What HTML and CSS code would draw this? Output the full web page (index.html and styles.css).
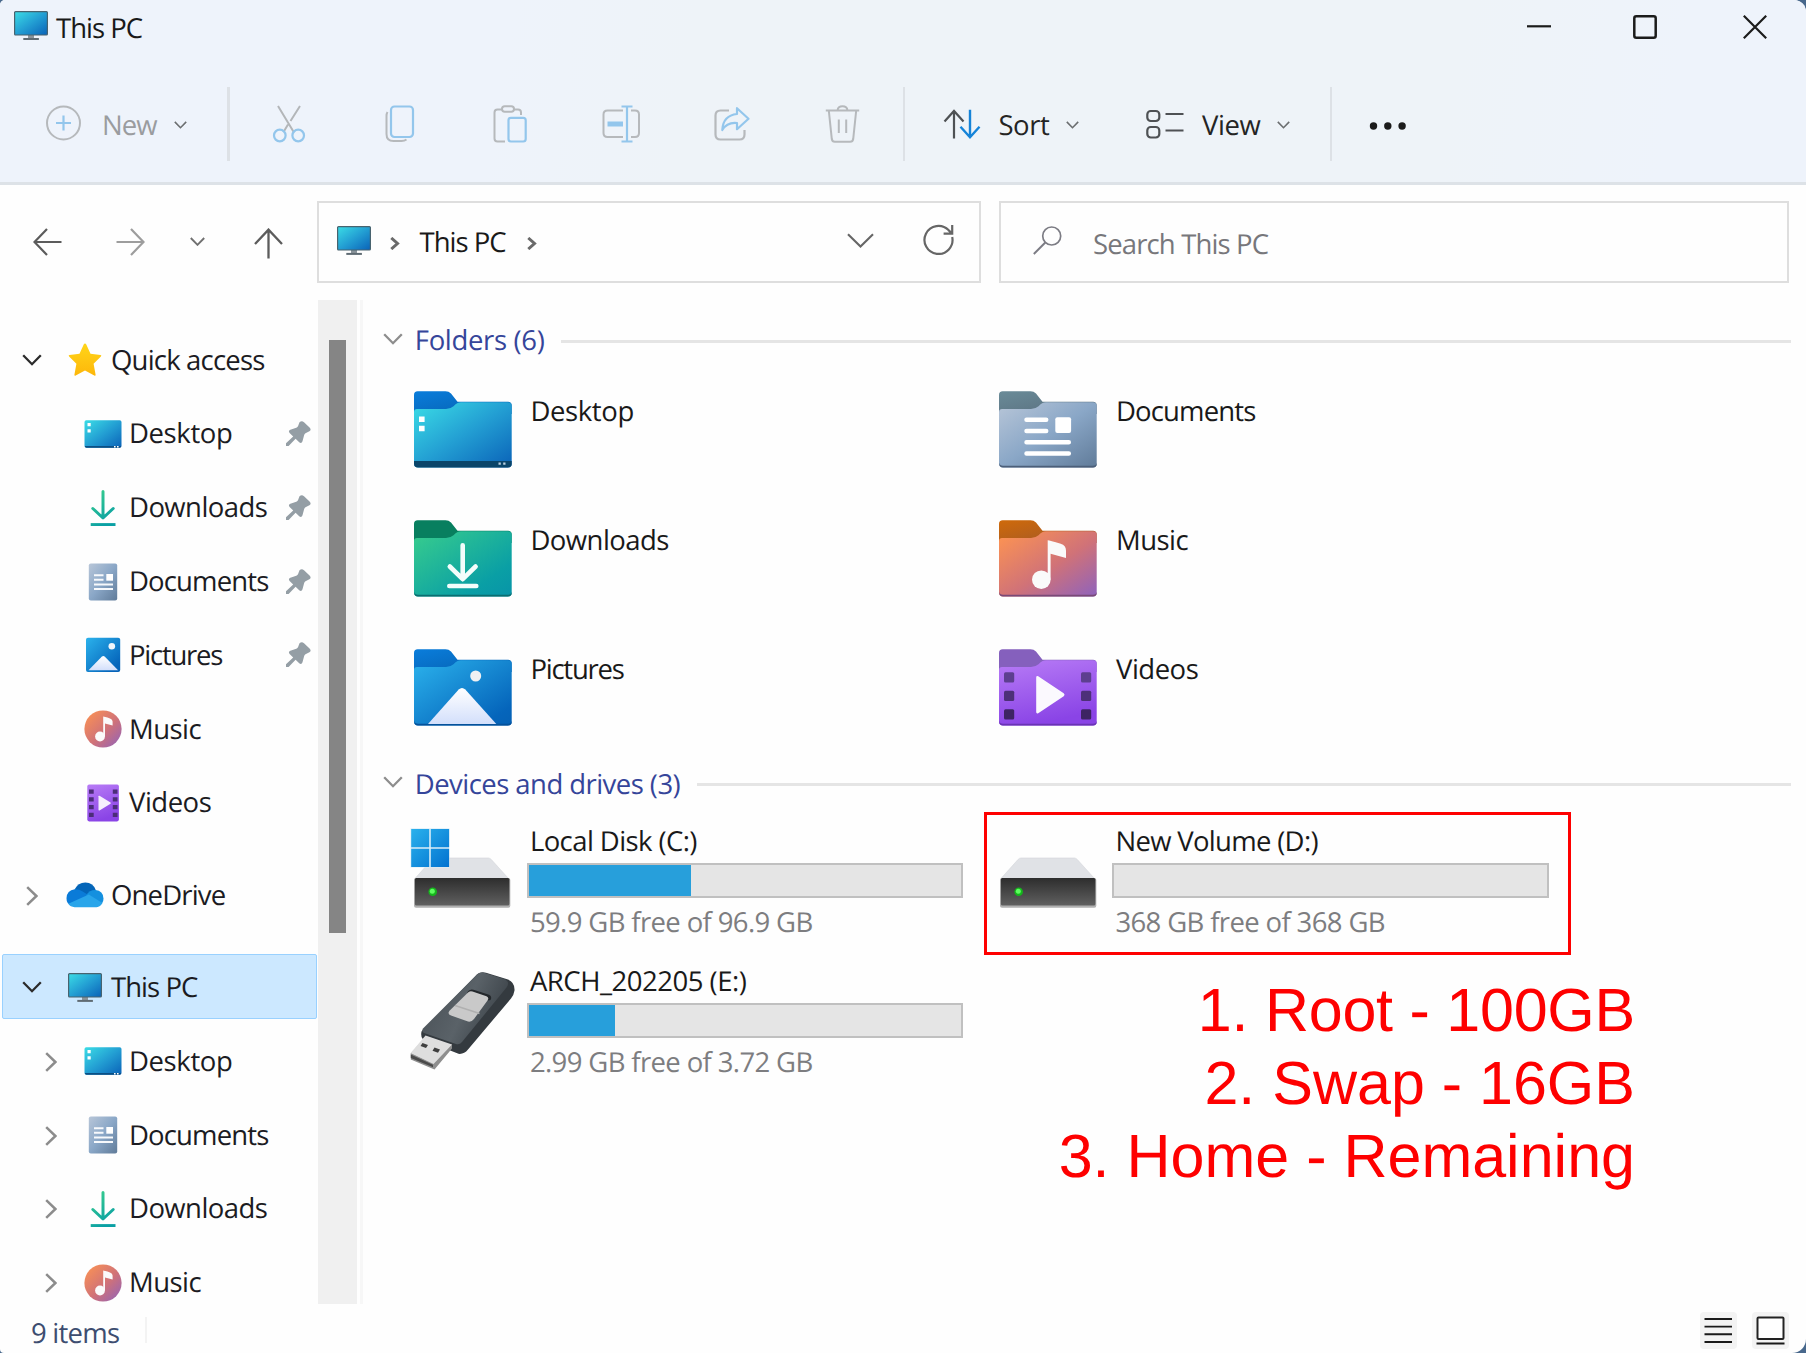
FILE: index.html
```
<!DOCTYPE html>
<html lang="en">
<head>
<meta charset="utf-8">
<title>This PC</title>
<link rel="stylesheet" href="styles.css">
</head>
<body>
<svg class="defs" aria-hidden="true">
  <defs>
    <linearGradient id="gScreen" x1="0" y1="0" x2="1" y2="1"><stop offset="0" stop-color="#3bdde6"/><stop offset=".5" stop-color="#239fd3"/><stop offset="1" stop-color="#0a62b8"/></linearGradient>
    <linearGradient id="gGreen" x1="0" y1="0" x2="1" y2="1"><stop offset="0" stop-color="#38cd8d"/><stop offset=".75" stop-color="#0a9fa5"/><stop offset="1" stop-color="#0894a8"/></linearGradient>
    <linearGradient id="gArrow" gradientUnits="userSpaceOnUse" x1="8" y1="4" x2="26" y2="32"><stop offset="0" stop-color="#38cd8d"/><stop offset="1" stop-color="#0aa0a4"/></linearGradient>
    <linearGradient id="gBlue" x1="0" y1="0" x2="1" y2="1"><stop offset="0" stop-color="#2bb2ec"/><stop offset=".85" stop-color="#0565bb"/><stop offset="1" stop-color="#0561b5"/></linearGradient>
    <linearGradient id="gGrey" x1="0" y1="0" x2="1" y2="1"><stop offset="0" stop-color="#b8c6d8"/><stop offset=".5" stop-color="#8aa7c7"/><stop offset="1" stop-color="#607b99"/></linearGradient>
    <linearGradient id="gMusic" x1="0" y1="0" x2="1" y2="1"><stop offset="0" stop-color="#ff9550"/><stop offset=".55" stop-color="#d07278"/><stop offset="1" stop-color="#8e62bd"/></linearGradient>
    <linearGradient id="gVideo" x1="0" y1="0" x2=".3" y2="1"><stop offset="0" stop-color="#b87cf6"/><stop offset="1" stop-color="#8a44e6"/></linearGradient>
    <linearGradient id="gTabBlue" x1="0" y1="0" x2="1" y2="1"><stop offset="0" stop-color="#0a7ddb"/><stop offset="1" stop-color="#055fae"/></linearGradient>
    <linearGradient id="gTabGrey" x1="0" y1="0" x2="1" y2="1"><stop offset="0" stop-color="#6a8b98"/><stop offset="1" stop-color="#576b7b"/></linearGradient>
    <linearGradient id="gTabMusic" x1="0" y1="0" x2="1" y2="1"><stop offset="0" stop-color="#cf6a0a"/><stop offset="1" stop-color="#9c562c"/></linearGradient>
    <linearGradient id="gHill" x1="0" y1="0" x2="0" y2="1"><stop offset="0" stop-color="#ffffff"/><stop offset="1" stop-color="#d3dffb"/></linearGradient>
    <linearGradient id="gStar" x1="0" y1="0" x2="0" y2="1"><stop offset="0" stop-color="#ffd519"/><stop offset="1" stop-color="#fdb70a"/></linearGradient>
    <linearGradient id="gDrive" x1="0" y1="0" x2="0" y2="1"><stop offset="0" stop-color="#2d2d2d"/><stop offset="1" stop-color="#606060"/></linearGradient>
    <linearGradient id="gLogo" x1="0" y1="0" x2="1" y2="1"><stop offset="0" stop-color="#2ab1ec"/><stop offset="1" stop-color="#0272d0"/></linearGradient>
    <linearGradient id="gStick" x1="0" y1="0" x2="1" y2=".4"><stop offset="0" stop-color="#474e54"/><stop offset=".6" stop-color="#5a6268"/><stop offset="1" stop-color="#3d444a"/></linearGradient>
    <linearGradient id="gPlug" x1="0" y1="0" x2="1" y2="1"><stop offset="0" stop-color="#ececec"/><stop offset="1" stop-color="#a2a2a2"/></linearGradient>

    <symbol id="pc" viewBox="0 0 34 29"><path fill="#8a949b" d="M14 24h6v3.5h-6z"/><path fill="#5f6b73" d="M9.3 26.9h15.6v2H9.3z"/><rect x=".6" y=".6" width="32.8" height="23.4" rx="1" fill="url(#gScreen)" stroke="#48636f" stroke-width="1.2"/></symbol>
    <symbol id="v" viewBox="0 0 20 12"><path d="M1.2 1.2 10 10.2l8.8-9" fill="none" stroke="currentColor" stroke-width="2.3"/></symbol>
    <symbol id="vs" viewBox="0 0 13 8"><path d="M.8.9 6.500 6.700l5.700-5.800" fill="none" stroke="currentColor" stroke-width="1.6"/></symbol>
    <symbol id="r" viewBox="0 0 12 20"><path d="M1.200 1.200 10.400 10l-9.200 8.800" fill="none" stroke="currentColor" stroke-width="2.5"/></symbol>
    <symbol id="rs" viewBox="0 0 10 13"><path d="M1.300 1 7.500 6.500l-6.200 5.500" fill="none" stroke="currentColor" stroke-width="3"/></symbol>

    <symbol id="s-desktop" viewBox="0 0 38 28"><rect x=".5" y=".2" width="37" height="27.600" rx="1.800" fill="url(#gScreen)"/><path fill="#0b4f84" d="M.8 26h36.400q-.3 1.800-1.800 1.800H2.500Q1 27.800.8 26z"/><path fill="#fff" d="M3.500 3h3.200v3.200H3.500zM3.500 9.200h3.200v3.200H3.500zM30 26h1.600v1.600H30zM33 26h1.600v1.600H33z"/></symbol>
    <symbol id="s-downloads" viewBox="0 0 38 38"><path fill="none" stroke="url(#gArrow)" stroke-width="3" stroke-linecap="round" stroke-linejoin="round" d="M19 2.500V28.500M8.800 19.500 19 29l10.200-9.500"/><path fill="url(#gArrow)" d="M6.700 34.100h24.800v2.900H6.700z"/></symbol>
    <symbol id="s-documents" viewBox="0 0 38 38"><rect x="4.800" y=".5" width="28.400" height="37" rx="2" fill="url(#gGrey)"/><path stroke="#f7f9fc" stroke-width="1.900" d="M10 12.300h9.500M10 16.800h9.500M10 21.500h19M10 26h19"/><path fill="#fff" d="M22.300 11h6.700v6.700h-6.700z"/></symbol>
    <symbol id="s-pictures" viewBox="0 0 38 38"><rect x="2" y="1.800" width="34.200" height="34.200" rx="2" fill="url(#gBlue)"/><circle cx="27.800" cy="10.300" r="3.300" fill="#eef5fb"/><path fill="url(#gHill)" d="m4.500 34.200 13.200-13.400q1.600-1.400 3.200 0l13.200 13.400z"/></symbol>
    <symbol id="s-music" viewBox="0 0 38 38"><circle cx="19" cy="19" r="18.600" fill="url(#gMusic)"/><circle cx="16" cy="26.500" r="4.900" fill="#fbfafa"/><path fill="#fbfafa" d="M19.200 6.500q1 0 6.800 1.900 2.600.8 2.600 3v4l-7.600-1.900v13h-1.800z"/></symbol>
    <symbol id="s-videos" viewBox="0 0 38 38"><rect x="3.300" y=".6" width="31.600" height="36.800" rx="1.800" fill="url(#gVideo)"/><path fill="#4b2d78" d="M5 5.500h4.700v4.200H5zM5 13.300h4.700v4.200H5zM5 21h4.700v4.200H5zM5 28.800h4.700V33H5zM28.800 5.500h4.700v4.200h-4.700zM28.800 13.300h4.700v4.200h-4.700zM28.800 21h4.700v4.200h-4.700zM28.800 28.800h4.700V33h-4.700z"/><path fill="#f5effd" d="M14.500 12.300q0-1 1-.5l11 6.700q.8.600 0 1.200l-11 6.700q-1 .4-1-.6z"/></symbol>
    <symbol id="s-star" viewBox="0 0 34 34"><path fill="url(#gStar)" d="M17 .6q.8 0 1.300 1l4.200 9.200 10 1.200q1.500.4.400 1.600l-7.300 7.100 2 11q.1 1.500-1.300.9L17 27.600l-9.300 5q-1.400.6-1.300-.9l2-11L1.100 13.600Q0 12.400 1.500 12l10-1.200 4.200-9.200q.5-1 1.300-1z"/></symbol>
    <symbol id="s-cloud" viewBox="0 0 38 26"><path fill="#0465b8" d="M8.500 7.500Q12 .7 19.300.6q8 .3 10.700 7.800L22 16z"/><path fill="#0a7bd8" d="M6 24Q.3 22 .5 16.200.8 8.200 8.700 7.200q4.300-.2 8 2.300l7 4.600z"/><path fill="#1490df" d="M20 13.500q3.500-5.500 9.500-5.400 7.600.9 8 8.300.1 3-1.700 5.500z"/><path fill="#29a5ea" d="M2.300 21.800 22.800 12.500 36.400 21q-2 3.900-5.800 4.200H8.500q-4-.2-6.200-3.400z"/></symbol>
    <symbol id="pin" viewBox="0 0 25 26"><path fill="#949ea5" d="M13.500 1.200Q15.800-.6 18 1.200l5.800 5.500q1.800 2-.4 3.600L19.500 12.200q-1 .6-1.400 2l-1.600 6q-1 2.800-3.300 1L9.600 17.800 2.600 24.900H0v-2.600l7.200-6.800-3.600-3.600q-1.700-2.200.7-3.200l6-2q1.300-.5 1.800-1.600z"/></symbol>

    <symbol id="tab" viewBox="0 0 98 77"><path d="M0 23V4Q0 .3 3.700.3H31.500q3.300 0 5.500 2.200l6.500 8.200H94q3.700 0 3.700 3.500V23z"/></symbol>
    <symbol id="front" viewBox="0 0 98 77"><path d="M0 21q0-3 3-3H32q4.500 0 7.500-2.700 3.500-4 7.500-4h47q3.700 0 3.700 3.500V72.700q0 3.800-3.700 3.800H4q-4 0-4-3.800z"/></symbol>
    <symbol id="rim" viewBox="0 0 98 77"><path d="M.3 71.500v1.200q0 3.800 3.700 3.800h90q3.700 0 3.700-3.800v-1.200q-.3 3.300-3.700 3.300H4q-3.400 0-3.700-3.300z"/></symbol>
    <symbol id="drive" viewBox="0 0 106 110"><path fill="#e0e2e6" stroke="#d3d5da" stroke-width=".6" d="M25 37h53.500q1.500 0 2.800 1.500L98.500 57.500H5L22 38.500Q23.300 37 25 37z"/><rect x="4" y="57" width="96.300" height="29.800" rx="2" fill="#b0b0b0"/><rect x="4.900" y="57" width="94.500" height="27.500" rx="1.500" fill="url(#gDrive)"/><circle cx="22.700" cy="70.800" r="4.300" fill="#15b51c"/><circle cx="22.300" cy="70.300" r="2.500" fill="#5dfc5e"/></symbol>
  </defs>
</svg>

<div class="window">
  <header class="header">
    <div class="titlebar">
      <svg class="pc"><use href="#pc"/></svg>
      <span class="title">This PC</span>
      <div class="controls">
        <svg width="24" height="24"><path d="M0 11.300h24" stroke="#1b1b1b" stroke-width="2.200"/></svg>
        <svg width="24" height="24"><rect x="1.300" y="1.300" width="21.400" height="21.400" rx="2" fill="none" stroke="#1b1b1b" stroke-width="2.500"/></svg>
        <svg width="24" height="24"><path d="m.8.800 22.400 22.400m0-22.400L.8 23.200" stroke="#1b1b1b" stroke-width="2.200"/></svg>
      </div>
    </div>
    <div class="toolbar">
      <svg class="tool new" viewBox="0 0 36 38"><circle cx="17.500" cy="19" r="16.500" fill="none" stroke="#b6b9bc" stroke-width="2"/><path d="M17.500 11.500v15M10 19h15" stroke="#93c6ec" stroke-width="2.200"/></svg>
      <span class="label label-new">New</span><svg class="vs"><use href="#vs"/></svg>
      <i class="sep sep-1"></i>
      <svg class="tool cut" viewBox="0 0 34 38"><path d="M6 1 22 27.500M28 1l-9.500 15M16 19.500 11.500 27" fill="none" stroke="#b3b6b9" stroke-width="2"/><circle cx="7.800" cy="30.500" r="5.800" fill="none" stroke="#93c6ec" stroke-width="2.200"/><circle cx="26.200" cy="30.500" r="5.800" fill="none" stroke="#93c6ec" stroke-width="2.200"/></svg>
      <svg class="tool copy" viewBox="0 0 30 38"><path d="M2.500 7Q1.500 8.500 1.500 11v18q0 7 7 7h8q3 0 5-1.500" fill="none" stroke="#b6b9bc" stroke-width="2"/><rect x="6" y="1.500" width="22" height="30.500" rx="3.500" fill="none" stroke="#93c6ec" stroke-width="2.200"/></svg>
      <svg class="tool paste" viewBox="0 0 34 38"><path d="M9 4.500H4.500q-3 0-3 3V33.500q0 3 3 3H12M21 4.500h4q3 0 3 3V10" fill="none" stroke="#b6b9bc" stroke-width="2"/><rect x="9" y="1.300" width="12" height="5.400" rx="2.700" fill="none" stroke="#b6b9bc" stroke-width="2"/><rect x="15.500" y="12.800" width="17.200" height="23.700" rx="2.500" fill="none" stroke="#93c6ec" stroke-width="2.200"/></svg>
      <svg class="tool rename" viewBox="0 0 39 38"><path d="M21 5.500H5.500q-4 0-4 4v18.500q0 4 4 4H21M29 5.500h4q4 0 4 4v18.500q0 4-4 4h-4" fill="none" stroke="#b6b9bc" stroke-width="2"/><path d="M5.500 19H21" stroke="#93c6ec" stroke-width="5"/><path d="M25 1.500v35M19.500 1.500h11M19.500 36.500h11" stroke="#93c6ec" stroke-width="2.200"/></svg>
      <svg class="tool share" viewBox="0 0 36 38"><path d="M15 5.500H6.500q-5 0-5 5v19q0 5 5 5h19q5 0 5-5V25" fill="none" stroke="#b6b9bc" stroke-width="2.200"/><path d="M23 3.200 34.500 13.700 23 24.200v-6.200Q13 17 8.300 25 9 10.500 23 9z" fill="none" stroke="#93c6ec" stroke-width="2.200" stroke-linejoin="round"/></svg>
      <svg class="tool trash" viewBox="0 0 35 38"><path d="M.8 5.500h33.400M12.500 5.500Q13 1.300 17.500 1.300t5 4.200M3.800 5.500l3 28.500q.4 2.700 3 2.700h15.400q2.600 0 3-2.700l3-28.500M13.800 14.500v13.500M21.200 14.500v13.500" fill="none" stroke="#b6b9bc" stroke-width="2"/></svg>
      <i class="sep sep-2"></i>
      <svg class="tool sort" viewBox="0 0 38 30"><path d="M11 29.500V2.500M1.500 12.500 11 2l9.500 10.500" fill="none" stroke="#4e5154" stroke-width="2.200"/><path d="M27 .8v27M17.500 17.800 27 28.200l9.500-10.400" fill="none" stroke="#1583d8" stroke-width="2.400"/></svg>
      <span class="label label-sort">Sort</span><svg class="vs"><use href="#vs"/></svg>
      <svg class="tool view" viewBox="0 0 38 30"><g fill="none" stroke="#4e5154" stroke-width="2.200"><rect x="1.300" y="2" width="12" height="10" rx="3.500"/><rect x="1.300" y="18" width="12" height="10.500" rx="3.500"/><path d="M19.500 5h18M19.500 21.500h18"/></g></svg>
      <span class="label label-view">View</span><svg class="vs"><use href="#vs"/></svg>
      <i class="sep sep-3"></i>
      <svg class="tool more" viewBox="0 0 38 10"><g fill="#1b1b1b"><circle cx="4.500" cy="5" r="3.700"/><circle cx="18.800" cy="5" r="3.700"/><circle cx="33.100" cy="5" r="3.700"/></g></svg>
    </div>
  </header>

  <nav class="nav">
    <svg class="back" viewBox="0 0 29 28"><path d="M28.500 14H1.500M14 1 1.500 14 14 27" fill="none" stroke="#5c5c5c" stroke-width="2.200"/></svg>
    <svg class="fwd" viewBox="0 0 29 28"><path d="M.5 14h27M15 1l12.500 13L15 27" fill="none" stroke="#9d9d9d" stroke-width="2.200"/></svg>
    <svg class="recent" viewBox="0 0 15 9"><path d="m.8 1 6.700 6.800L14.200 1" fill="none" stroke="#707070" stroke-width="1.900"/></svg>
    <svg class="up" viewBox="0 0 29 31"><path d="M14.500 30.500V2M1 16 14.500 1.600 28 16" fill="none" stroke="#5c5c5c" stroke-width="2.300"/></svg>
    <div class="box address">
      <svg class="pc"><use href="#pc"/></svg>
      <svg class="crumb"><use href="#rs"/></svg>
      <span class="place">This PC</span>
      <svg class="crumb"><use href="#rs"/></svg>
      <svg class="drop" viewBox="0 0 27 15"><path d="m1 1.200 12.500 12.300L26 1.200" fill="none" stroke="#666" stroke-width="2.100"/></svg>
      <svg class="refresh" viewBox="0 0 31 31"><path d="M29.200 13A14 14 0 1 1 25.500 6.100L29 9.500M29.200 1v8.700h-8.600" fill="none" stroke="#666" stroke-width="2.200"/></svg>
    </div>
    <div class="box search">
      <svg viewBox="0 0 29 29"><circle cx="18.700" cy="10" r="9" fill="none" stroke="#7c7c84" stroke-width="1.700"/><path d="M12.300 16.500.8 28" stroke="#7c7c84" stroke-width="1.900"/></svg>
      <span class="hint">Search This PC</span>
    </div>
  </nav>

  <div class="body">
    <aside class="tree">
      <div class="row open"><svg class="tw"><use href="#v"/></svg><svg class="ic star"><use href="#s-star"/></svg><span class="t-quick">Quick access</span></div>
      <div class="row sub"><svg class="ic wide"><use href="#s-desktop"/></svg><span class="t-desktop">Desktop</span><svg class="pin"><use href="#pin"/></svg></div>
      <div class="row sub"><svg class="ic"><use href="#s-downloads"/></svg><span class="t-downloads">Downloads</span><svg class="pin"><use href="#pin"/></svg></div>
      <div class="row sub"><svg class="ic"><use href="#s-documents"/></svg><span class="t-documents">Documents</span><svg class="pin"><use href="#pin"/></svg></div>
      <div class="row sub"><svg class="ic"><use href="#s-pictures"/></svg><span class="t-pictures">Pictures</span><svg class="pin"><use href="#pin"/></svg></div>
      <div class="row sub"><svg class="ic"><use href="#s-music"/></svg><span class="t-music">Music</span></div>
      <div class="row sub"><svg class="ic"><use href="#s-videos"/></svg><span class="t-videos">Videos</span></div>
      <div class="row gap"><svg class="tw right"><use href="#r"/></svg><svg class="ic cloud"><use href="#s-cloud"/></svg><span class="t-onedrive">OneDrive</span></div>
      <div class="row open selected"><svg class="tw"><use href="#v"/></svg><svg class="ic monitor"><use href="#pc"/></svg><span class="t-pc">This PC</span></div>
      <div class="row sub"><svg class="tw right"><use href="#r"/></svg><svg class="ic wide"><use href="#s-desktop"/></svg><span class="t-desktop">Desktop</span></div>
      <div class="row sub"><svg class="tw right"><use href="#r"/></svg><svg class="ic"><use href="#s-documents"/></svg><span class="t-documents">Documents</span></div>
      <div class="row sub"><svg class="tw right"><use href="#r"/></svg><svg class="ic"><use href="#s-downloads"/></svg><span class="t-downloads">Downloads</span></div>
      <div class="row sub"><svg class="tw right"><use href="#r"/></svg><svg class="ic"><use href="#s-music"/></svg><span class="t-music">Music</span></div>
    </aside>
    <div class="scrollbar"><div class="thumb"></div></div>

    <main class="main">
      <h2 class="group"><svg class="gv"><use href="#v"/></svg><span class="t-folders">Folders (6)</span><i></i></h2>
      <div class="folders">
        <div class="folder"><svg viewBox="0 0 98 77"><use href="#tab" fill="url(#gTabBlue)"/><use href="#front" fill="url(#gScreen)"/><path fill="#0b4569" d="M0 70h97.700v2.700q0 3.800-3.700 3.800H4q-4 0-4-3.800z"/><path fill="#fff" d="M5 25.500h5.600V31H5zM5 34.700h5.600v5.500H5z"/><path fill="#b9cfe0" d="M84.500 71.500h2.300v2.300h-2.300zM89.200 71.500h2.300v2.300h-2.300z"/></svg><span class="t-desktop">Desktop</span></div>
        <div class="folder"><svg viewBox="0 0 98 77"><use href="#tab" fill="url(#gTabGrey)"/><use href="#front" fill="url(#gGrey)"/><use href="#rim" fill="#4c5f79"/><path stroke="#fff" stroke-width="4.500" stroke-linecap="round" d="M27.500 28.700h19.700M27.500 40h19.700M27.500 51.300h42.300M27.500 62.500h42.300"/><rect x="56.300" y="26.300" width="15.800" height="15.800" rx="2" fill="#fff"/></svg><span class="t-documents">Documents</span></div>
        <div class="folder"><svg viewBox="0 0 98 77"><use href="#tab" fill="#087f5f"/><use href="#front" fill="url(#gGreen)"/><use href="#rim" fill="#0b6e70"/><path fill="none" stroke="#f3fdfb" stroke-width="4.600" stroke-linecap="round" stroke-linejoin="round" d="M48.700 25.300V58M35.800 46.500 48.700 59.200l12.900-12.700M35.300 66h27"/></svg><span class="t-downloads">Downloads</span></div>
        <div class="folder"><svg viewBox="0 0 98 77"><use href="#tab" fill="url(#gTabMusic)"/><use href="#front" fill="url(#gMusic)"/><use href="#rim" fill="#794a77"/><circle cx="42.300" cy="59.700" r="9.300" fill="#fafafa"/><path fill="#fafafa" d="M48.700 20.300q2 .2 13 3.500 5.300 1.700 5.300 7v7.300L51.600 33.800v26h-2.900z"/></svg><span class="t-music">Music</span></div>
        <div class="folder"><svg viewBox="0 0 98 77"><use href="#tab" fill="url(#gTabBlue)"/><use href="#front" fill="url(#gBlue)"/><use href="#rim" fill="#05519a"/><circle cx="61.700" cy="27" r="5.500" fill="#f1f1f3"/><path fill="url(#gHill)" d="M14 75 44.700 40.500q3.300-3 6.600 0L82.300 75z"/></svg><span class="t-pictures">Pictures</span></div>
        <div class="folder"><svg viewBox="0 0 98 77"><use href="#tab" fill="#8560bd"/><use href="#front" fill="url(#gVideo)"/><use href="#rim" fill="#6a34b4"/><g fill="#5d3f8f"><rect x="5" y="23.300" width="10.200" height="10.200" rx="1.500"/><rect x="82" y="23.300" width="10.200" height="10.200" rx="1.500"/></g><g fill="#4d3079"><rect x="5" y="41.800" width="10.200" height="10.200" rx="1.500"/><rect x="82" y="41.800" width="10.200" height="10.200" rx="1.500"/></g><g fill="#3d2463"><rect x="5" y="60.300" width="10.200" height="10.200" rx="1.500"/><rect x="82" y="60.300" width="10.200" height="10.200" rx="1.500"/></g><path fill="#fbf9fe" d="M37.200 28.500q0-2 2-1.300l25.500 17q1.800 1.500 0 3l-25.500 17q-2 .7-2-1.300z"/></svg><span class="t-videos">Videos</span></div>
      </div>

      <h2 class="group devices"><svg class="gv"><use href="#v"/></svg><span class="t-devices">Devices and drives (3)</span><i></i></h2>
      <div class="drives">
        <div class="drive">
          <svg viewBox="0 0 106 110"><use href="#drive"/><rect x=".5" y="7.300" width="39" height="39.200" fill="#d9edf8"/><path fill="url(#gLogo)" d="M1.200 8h18v18.300h-18zM20.800 8h18.300v18.300H20.800zM1.200 27.800h18V46h-18zM20.800 27.800h18.300V46H20.800z"/></svg>
          <div class="info"><span class="name t-c">Local Disk (C:)</span><div class="bar"><b style="width:37.500%"></b></div><span class="free">59.9 GB free of 96.9 GB</span></div>
        </div>
        <div class="drive">
          <svg viewBox="0 0 106 110"><use href="#drive"/></svg>
          <div class="info"><span class="name t-d">New Volume (D:)</span><div class="bar"></div><span class="free">368 GB free of 368 GB</span></div>
        </div>
        <div class="drive">
          <svg viewBox="0 0 106 110"><path fill="#343a3f" d="M66 14.500Q70 10 76 11.700L98 18.500q7 3 6.500 11-.5 4-3.500 8L58 88.500q-4 5-9.500 4.300L16 80q-6-2-4.500-9.500Z"/><path fill="url(#gStick)" d="M67 13.500q3-2.700 7-1.700L94 18q6.500 2.500 2.500 8.500L52 81q-2.500 3-6 2L14 72q-3-1.500-1-4.500z"/><path fill="#24282c" d="M57.500 31q2-3.500 6-2.300l15.500 5q3.500 2 1.500 5.300l-2 .5L57 33z"/><path fill="#c9c9c9" d="M57.500 32q2-2.500 5-1.500l14 4.700q3 1.200 1 4.300L64 58q-2.500 3.300-6 2.500L41 54.500q-4-1.500-1.500-4.700z"/><path fill="none" stroke="#b0b0b0" stroke-width="1.500" d="m45 44.500 24.500 8"/><path fill="url(#gPlug)" d="M15.500 75.500 42 84.500 24.500 106 .8 96.500V92z"/><path fill="#8e8e8e" d="m.8 92 22.700 10.500L42 83v4.500L24.500 108.500.8 98.500z"/><path fill="#dedede" d="M15.500 74.500 42 83.500 23.500 103 .8 92z"/><path fill="#4a4a4a" d="m.8 93.500 22.200 10.200v2.600L.8 97z"/><path fill="#3f3f3f" d="m12.500 82 5.500 2-2 3-5.500-2zM24.500 86.500l5.500 2-2 3.200-5.500-2z"/></svg>
          <div class="info"><span class="name t-e">ARCH_202205 (E:)</span><div class="bar"><b style="width:20%"></b></div><span class="free">2.99 GB free of 3.72 GB</span></div>
        </div>
      </div>
      <div class="highlight"></div>
      <div class="notes"><div class="first">1. Root - 100GB</div><div>2. Swap - 16GB</div><div>3. Home - Remaining</div></div>
    </main>
  </div>

  <footer class="status">
    <span class="count">9 items</span><i class="split"></i>
    <div class="modes">
      <svg viewBox="0 0 37 37"><path d="M4.500 7H32M4.500 14.600H32M4.500 22.200H32M4.500 30H32" stroke="#1a1a1a" stroke-width="1.900"/></svg>
      <svg viewBox="0 0 37 37"><rect x="5.500" y="5.500" width="26" height="21.500" rx="1" fill="#fff" stroke="#222" stroke-width="2"/><path d="M4.500 31.500H32.500" stroke="#1a1a1a" stroke-width="2"/></svg>
    </div>
  </footer>
</div>
</body>
</html>
```
FILE: styles.css
```
* { box-sizing: border-box; }
body {
  margin: 0;
  width: 1806px;
  height: 1353px;
  overflow: hidden;
  background: #48688c;
  font: 27.5px/38px "Open Sans", "Noto Sans", sans-serif;
  color: #191919;
  text-rendering: geometricPrecision;
}
svg { display: block; flex: none; }
span { white-space: nowrap; }
.defs { position: absolute; width: 0; height: 0; }
.window {
  display: flex;
  flex-direction: column;
  height: 1353px;
  overflow: hidden;
  border-radius: 5px 12px 14px 4px;
  background: #fefefe;
}

/* title bar and command bar */
.header {
  flex: none;
  height: 185px;
  border-bottom: 3px solid #dde2e7;
  background: linear-gradient(100deg, #eef3fb 0, #eef3fb 28%, #eef3f8 38%, #eef3f8 80%, #eef3fb 92%);
}
.titlebar { display: flex; align-items: flex-start; height: 66px; padding: 8px 39.5px 0 14px; }
.pc { width: 34px; height: 29px; }
.titlebar .pc { margin-top: 3px; }
.title { margin: 2px 0 0 8px; letter-spacing: -1px; }
.controls { display: flex; gap: 82px; margin: 6.5px 0 0 auto; }
.controls svg:nth-child(3) { margin-left: 3.5px; }
.toolbar { display: flex; align-items: center; height: 116px; }
.tool { height: 38px; }
.label { height: 38px; margin-top: 4px; color: #242424; }
.vs { width: 13px; height: 8px; margin-top: 1px; color: #6b6e70; }
.sep { flex: none; width: 2.5px; height: 74px; background: #dde1e6; }
.new { width: 36px; margin-left: 46px; margin-top: -2px; }
.label-new { width: 71.5px; margin-left: 20px; letter-spacing: -1px; color: #9a9c9f; }
.sep-1 { margin-left: 40.5px; }
.cut { width: 34px; margin-left: 42px; }
.copy { width: 30px; margin-left: 79px; }
.paste { width: 34px; margin-left: 78.5px; }
.rename { width: 39px; margin-left: 74.5px; }
.share { width: 36px; margin-left: 73.5px; }
.trash { width: 35px; margin-left: 75px; }
.sep-2 { margin-left: 42.5px; }
.sort { width: 38px; height: 30px; margin-left: 37.5px; }
.label-sort { width: 67px; margin-left: 18px; letter-spacing: -.47px; }
.view { width: 38px; height: 30px; margin-left: 67px; }
.label-view { width: 74.5px; margin-left: 18.5px; letter-spacing: -.46px; }
.sep-3 { margin-left: 40px; }
.more { width: 38px; height: 10px; margin: 3px 0 0 36.500px; }

/* navigation row */
.nav { display: flex; flex: none; align-items: center; height: 115px; padding: 0 0 2px 32.5px; }
.back, .fwd { width: 29px; height: 28px; }
.fwd { margin-left: 54px; }
.recent { width: 15px; height: 9px; margin: -1px 0 0 45.5px; }
.up { width: 29px; height: 31px; margin: 4px 0 0 49px; }
.box { display: flex; align-items: center; flex: none; height: 82px; border: 2px solid #dedede; }
.address { width: 664px; margin-left: 33.5px; padding: 0 24.5px 2px 18px; }
.crumb { width: 10px; height: 13px; margin-top: 5px; color: #6a6a6a; }
.address .pc + .crumb { margin-left: 19px; }
.place { margin: 4px 21.5px 0 20px; letter-spacing: -1px; }
.drop { width: 27px; height: 15px; margin-left: auto; }
.refresh { width: 31px; height: 31px; margin: -2px 0 0 49px; }
.search { width: 790px; margin-left: 18px; padding: 1px 0 0 32px; }
.search svg { width: 29px; height: 29px; margin-top: -3px; }
.hint { margin: 5px 0 0 31.5px; letter-spacing: -.87px; color: #77777b; }

/* tree */
.body { display: flex; flex: none; height: 1004px; }
.tree { width: 318.3px; padding-top: 22.3px; overflow: hidden; }
.row { display: flex; align-items: center; height: 73.8px; padding: 1px 0 0 22px; }
.row span { margin: 2px 0 0 7px; color: #1b1b22; }
.tw { width: 20px; height: 12px; margin-right: 24px; color: #2b2b2b; }
.tw.right { width: 12px; height: 20px; margin: 2px 28px 0 4px; color: #8c8c8c; }
.ic { width: 38px; height: 38px; }
.star { height: 34px; }
.wide { height: 28px; }
.cloud { height: 26px; }
.monitor { height: 29px; }
.sub { padding-left: 84px; }
.sub .ic { margin-top: 1px; }
.sub:has(.tw) { padding-left: 45px; }
.sub .tw.right { margin: 2px 27px 0 0; }
.pin { width: 25px; height: 26px; margin: 1px 7.5px 0 auto; }
.gap { margin: 18.5px 0; }
.selected { width: 315px; height: 65px; margin: 22.8px 0 4.5px 2px; padding: 2px 0 0 19px; border: 1px solid #99d1ff; border-radius: 2px; background: #cce8ff; }
.scrollbar { flex: none; width: 45px; border-right: 3px solid #f7f7f7; padding: 39.5px 0 0 11px; background: linear-gradient(90deg, #f0f0f0 38.7px, #fefefe 38.7px); }
.thumb { width: 17px; height: 593.5px; background: #858585; }

/* content pane */
.main { position: relative; flex: 1; padding: 19px 15.5px 0 19.5px; }
.group { display: flex; align-items: center; height: 40px; margin: 0; font-size: 27.5px; font-weight: 400; color: #35459a; }
.group span { margin-top: 4px; }
.gv { width: 20px; height: 12px; margin: -1px 12px 0 0; color: #8d8d8d; }
.group i { flex: 1; height: 3px; margin: 4px 0 0 17px; background: #e5e5e5; }
.folders { display: grid; grid-template-columns: 585.5px 585.5px; grid-auto-rows: 77px; row-gap: 52.1px; margin: 32.2px 0 36.4px 31.2px; }
.folder { display: flex; }
.folder svg { width: 98px; height: 77px; }
.folder span { margin: 2.1px 0 0 18.5px; }
.drives { display: grid; grid-template-columns: 585.5px 585.5px; grid-auto-rows: 119.4px; row-gap: 20.6px; margin: 18.3px 0 0 27.5px; }
.drive { display: flex; }
.drive svg { width: 106px; height: 110px; }
.info { width: 436.5px; margin-left: 10.3px; padding-top: 2px; }
.info span { display: block; padding-left: 3.3px; }
.bar { height: 35px; margin: 2px 0 6px; border: 2px solid #c0c0c0; background: #e5e5e5; }
.bar b { display: block; height: 31px; background: #279fdb; }
.free { letter-spacing: -.63px; color: #7d7d80; }
.highlight { position: absolute; left: 620.7px; top: 512px; width: 587px; height: 142.5px; border: 3px solid #fe0000; }
.notes { position: absolute; right: 171px; top: 674px; text-align: right; font: 61px/73px "Liberation Sans", Arial, sans-serif; color: #fe0000; }
.notes .first { letter-spacing: -.24px; }

/* status bar */
.status { display: flex; flex: none; align-items: center; height: 49px; padding: 3px 17px 0 31px; }
.count { margin-top: 7px; letter-spacing: -.77px; color: #3d4d70; }
.split { width: 2px; height: 26px; margin-left: 26px; background: #f3f3f3; }
.modes { display: flex; gap: 15px; margin: 1px 0 0 auto; }
.modes svg { width: 37px; height: 37px; border-radius: 4px; background: #f3f3f3; }

.t-quick { letter-spacing: -.81px; }
.t-desktop { letter-spacing: -.39px; }
.t-downloads { letter-spacing: -.57px; }
.t-documents { letter-spacing: -.86px; }
.t-pictures { letter-spacing: -1.26px; }
.t-music { letter-spacing: -.54px; }
.t-videos { letter-spacing: -.5px; }
.t-onedrive { letter-spacing: -.83px; }
.t-pc { letter-spacing: -.95px; }
.t-folders { letter-spacing: -.34px; }
.t-devices { letter-spacing: -.55px; }
.t-c { letter-spacing: -.59px; }
.t-d { letter-spacing: -.69px; }
.t-e { letter-spacing: -.48px; }
```
